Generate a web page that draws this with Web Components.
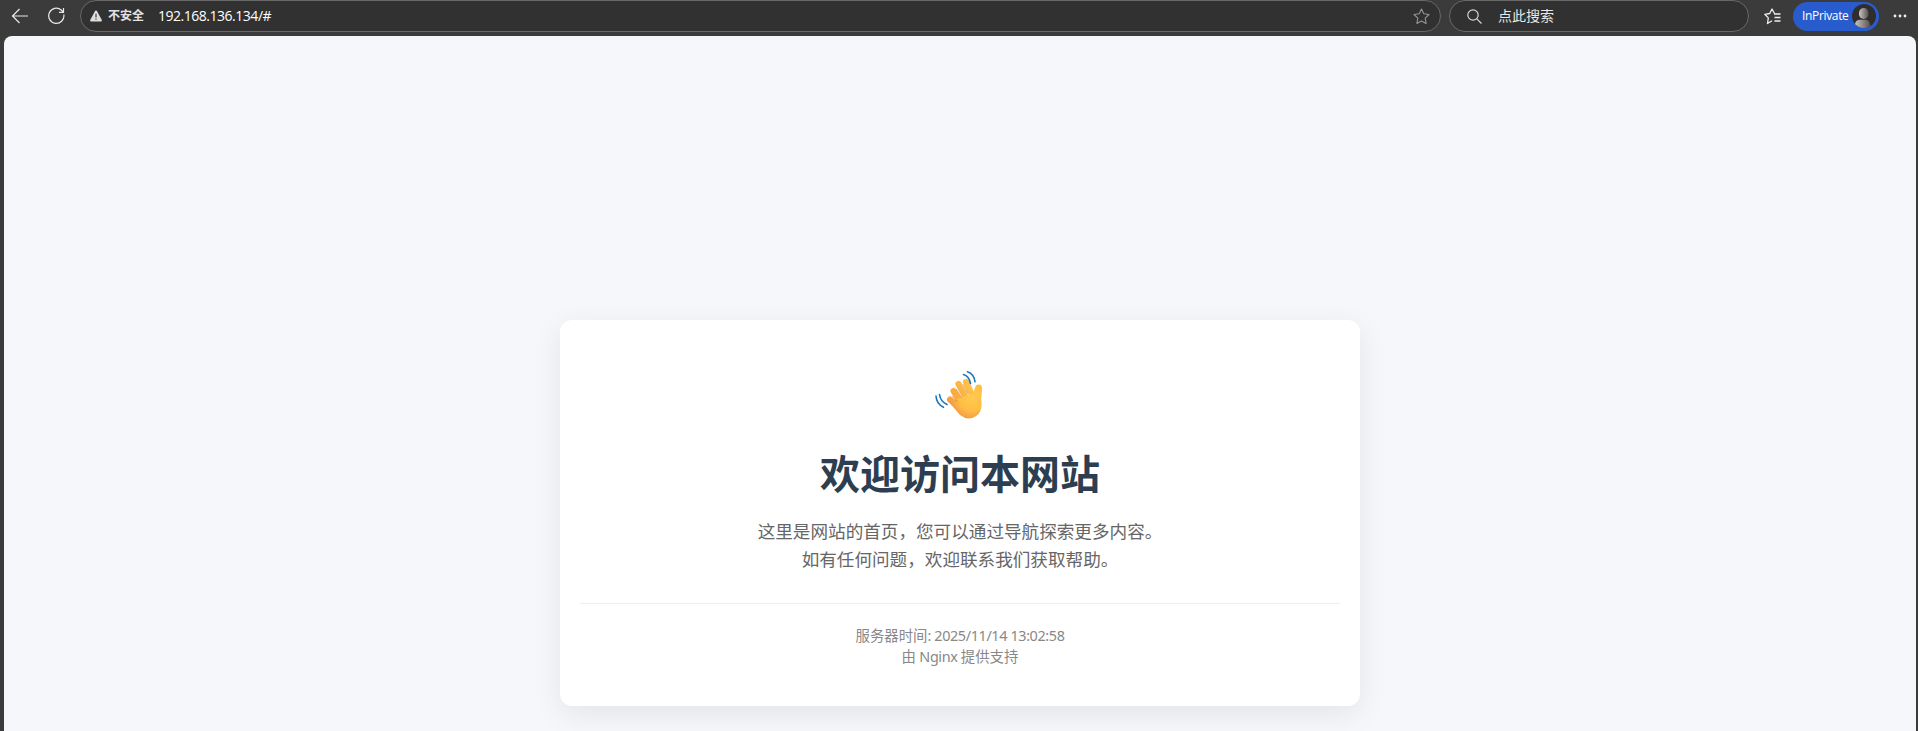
<!DOCTYPE html>
<html lang="zh-CN">
<head>
<meta charset="utf-8">
<title>欢迎访问本网站</title>
<style>
html,body{margin:0;height:100%;overflow:hidden;background:#3b3b3b}
body{font-family:"Noto Sans","Noto Sans CJK SC",sans-serif}
</style>
</head>
<body>
<browser-window>
  <browser-toolbar slot="toolbar"></browser-toolbar>
  <welcome-card>
    <waving-hand slot="icon"></waving-hand>
    <span slot="title">欢迎访问本网站</span>
    <span slot="text">这里是网站的首页，您可以通过导航探索更多内容。<br>如有任何问题，欢迎联系我们获取帮助。</span>
    <server-info slot="footer"></server-info>
  </welcome-card>
</browser-window>
<script>
const define = (name, html) => customElements.define(name, class extends HTMLElement {
  constructor() { super(); this.attachShadow({ mode: 'open' }).innerHTML = html; }
});

define('browser-window', `
<style>
:host{display:flex;flex-direction:column;height:100vh;background:#3b3b3b}
main{flex:1;min-height:0;margin:4px 2px 0 4px;background:#f5f7fb;border-radius:8px 8px 0 0;overflow:hidden;display:flex;justify-content:center;align-items:flex-start;padding-top:284px;box-sizing:border-box}
</style>
<slot name="toolbar"></slot><main><slot></slot></main>`);

define('browser-toolbar', `
<style>
:host{display:flex;height:32px;box-sizing:border-box;align-items:center;color:#fff;font:13px/20px "Noto Sans","Noto Sans CJK SC",sans-serif}
svg{display:block;fill:none;flex:none}
.back{margin-left:11px}.reload{margin-left:19px}
.field{height:32px;box-sizing:border-box;border:1px solid #686868;border-radius:16px;background:#313131;display:flex;align-items:center}
.address{width:1361px;margin-left:15px;padding:0 10px 0 9px}
.warn{margin-right:6px}.unsafe{font-size:12px;font-weight:600;color:#e2e2e2;width:50px}
.url{flex:1;font:14px/20px "Open Sans","Noto Sans",sans-serif;letter-spacing:-.48px}
.search{width:300px;margin-left:8px;padding-left:17px}.search span{font-size:14px;margin-left:16px;color:#e8e8e8}
.fav{margin-left:15px}
.private{height:29px;width:86px;box-sizing:border-box;border-radius:15px;background:#285ccd;margin-left:12px;display:flex;align-items:center;padding:0 3px 0 9px;justify-content:space-between}
.private span{font:12px/20px "Open Sans",sans-serif;letter-spacing:-.34px}
.more{margin-left:14px}
</style>
<svg class="back" width="18" height="16" viewBox="0 0 18 16" stroke="#e8e8e8" stroke-width="1.2"><path d="M17 8H1.5M8.5 1 1.5 8l7 7"/></svg>
<svg class="reload" width="17" height="18" viewBox="0 0 17 18" stroke="#e8e8e8" stroke-width="1.2"><path d="M15.8 7.5A7.6 7.6 0 1 1 13.2 3L15.5 5.2M15.5 1V5.4H11"/></svg>
<div class="field address">
  <svg class="warn" width="12" height="12" viewBox="0 0 12 12"><path d="M5.2.8Q6 0 6.8.8L11.8 10Q12 11.5 11 11.5H1Q0 11.5.2 10Z" fill="#dedede"/><path d="M6 3.7v3.8M6 8.6v1.2" stroke="#313131" stroke-width="1.1"/></svg>
  <span class="unsafe">不安全</span><span class="url">192.168.136.134/#</span>
  <svg width="17" height="17" viewBox="0 0 17 17" stroke="#949494" stroke-width="1.1" stroke-linejoin="round"><path d="m8.5 1 2.3 4.8 5.2.7-3.8 3.7.9 5.3-4.6-2.5-4.6 2.5.9-5.3L1 6.5l5.2-.7Z"/></svg>
</div>
<div class="field search">
  <svg width="15" height="15" viewBox="0 0 15 15" stroke="#d5d5d5" stroke-width="1.2"><circle cx="6" cy="6" r="5.2"/><path d="m9.8 9.8 4.7 4.7"/></svg>
  <span>点此搜索</span>
</div>
<svg class="fav" width="17" height="17" viewBox="0 0 17 17" stroke="#eee" stroke-width="1.3" stroke-linejoin="round"><path d="M10.5 5.5 8 1 5.7 5.5.8 6.3 4.3 9.9 3.5 15.5 8 12.8M10 6H16.5M10.5 9.5H16.5M10.5 13H16.5"/></svg>
<div class="private"><span>InPrivate</span>
<svg width="24" height="24" viewBox="0 0 24 24"><defs><linearGradient id="g"><stop stop-color="#c9c5c2"/><stop offset="1" stop-color="#58524e"/></linearGradient><clipPath id="c"><circle cx="12" cy="12" r="12"/></clipPath></defs><circle cx="12" cy="12" r="12" fill="#302e2d"/><g clip-path="url(#c)" fill="url(#g)"><rect x="7" y="4" width="9.5" height="11" rx="4.7"/><path d="M3 24V20Q4 15.8 8 15.8H14Q19 16.5 18 24Z"/></g></svg></div>
<svg class="more" width="14" height="4" viewBox="0 0 14 4"><g fill="#eee"><circle cx="2" cy="2" r="1.4"/><circle cx="7" cy="2" r="1.4"/><circle cx="12" cy="2" r="1.4"/></g></svg>`);

define('welcome-card', `
<style>
:host{display:block;box-sizing:border-box;width:800px;height:386px;padding:51px 20px 0;border-radius:12px;background:#fff;box-shadow:0 8px 30px rgba(0,0,0,.08);text-align:center;font-family:"Noto Sans","Noto Sans CJK SC",sans-serif}
h1{margin:23px 0 0;font-size:40px;line-height:64px;font-weight:700;color:#2c3e50}
p{margin:11px 0 0;font-size:17.6px;line-height:28.16px;color:#666}
footer{margin-top:30px;border-top:1px solid #eee;padding-top:21px;font-size:14.4px;line-height:21.6px;color:#888}
</style>
<slot name="icon"></slot><h1><slot name="title"></slot></h1><p><slot name="text"></slot></p><footer><slot name="footer"></slot></footer>`);

define('server-info', `
<style>:host{display:block;font-family:"Noto Sans","Noto Sans CJK SC",sans-serif}div{height:21px;line-height:21px}span{letter-spacing:-.38px}</style>
<div>服务器时间<span>: 2025/11/14 13:02:58</span></div><div>由<span> Nginx </span>提供支持</div>`);

define('waving-hand', `
<style>:host{display:block;width:48px;height:48px;margin:0 auto}svg{display:block;overflow:visible;transform:translateX(-1px)}</style>
<svg width="48" height="48" viewBox="0 0 48 48" fill="none" stroke-linecap="round" stroke-linejoin="round">
<defs>
<linearGradient id="f" gradientUnits="userSpaceOnUse" x1="12" y1="34" x2="38" y2="16"><stop stop-color="#f19a40"/><stop offset=".55" stop-color="#fbb23f"/><stop offset="1" stop-color="#ffc44a"/></linearGradient>
<radialGradient id="h" gradientUnits="userSpaceOnUse" cx="37" cy="26" r="22"><stop stop-color="#ffcb50"/><stop offset=".6" stop-color="#ffbe45"/><stop offset="1" stop-color="#f29d45"/></radialGradient></defs>
<path d="M15 28.5 24 37" stroke="url(#f)" stroke-width="6"/>
<path d="M18.5 20 27 33" stroke="url(#f)" stroke-width="6"/>
<path d="M23.500 13 32 29" stroke="url(#f)" stroke-width="6"/>
<path d="M31 11 38 26" stroke="url(#f)" stroke-width="6.200"/>
<path d="M14 31 24 27 38 22.500 40.300 16Q41 13.300 44 13.600Q47.500 14.200 47 18.500L46.200 29Q48 38 43 43.500Q34 51 25 44Z" fill="url(#h)"/>
<path d="m17.500 25.500 4.500 5.200M21.500 18.500l5 8M28 13.500l4.700 9" stroke="#e18b36" stroke-width="1.100" opacity=".65"/>
<path d="M28.500 3.500Q34 5 35.500 12.500M32.500.8Q39 3 40 10.800M4.500 23.500Q5.500 30.500 12 33.500M1 25Q1.500 33 8.500 36.200" stroke="#1b76ba" stroke-width="1.600"/>
</svg>`);
</script>
</body>
</html>
